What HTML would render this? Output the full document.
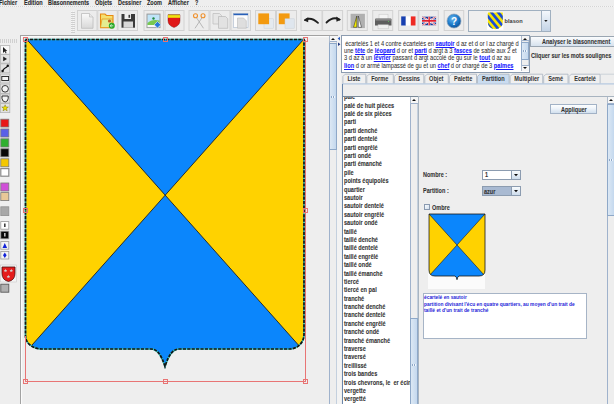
<!DOCTYPE html>
<html><head><meta charset="utf-8">
<style>
*{box-sizing:border-box;margin:0;padding:0}
html,body{width:614px;height:404px;overflow:hidden;background:#eeeeee;font-family:"Liberation Sans",sans-serif;}
.a{position:absolute}
.menu{font-size:6.9px;transform:scaleX(0.8);transform-origin:0 0;margin-top:-1.26px;font-weight:bold;color:#2a2a2a;top:-0.2px;white-space:nowrap;-webkit-text-stroke:0.1px #2a2a2a}
.tb{position:absolute;top:10px;width:20px;height:20px;border:1px solid #d6d6d6;border-radius:1px;background:#ececec}
.lt{position:absolute;left:0;width:10px;border:1px solid #c8c8c8;background:#e6e6e6}
.tab{position:absolute;top:74px;height:9px;font-size:7px;transform:scaleX(0.8);font-weight:bold;color:#333;text-align:center;line-height:9px;-webkit-text-stroke:0px #333}
.lst{font-size:7px;font-weight:bold;color:#333;-webkit-text-stroke:0.08px #333;white-space:nowrap;line-height:8.386px;width:90px}
.lst{transform:scaleX(0.8) !important;transform-origin:0 0}
.sb{position:absolute;background:#eeeeee;border-left:1px solid #b8c4d0}
.lbl{position:absolute;font-size:6.9px;transform:scaleX(0.8);transform-origin:0 0;font-weight:bold;color:#333;-webkit-text-stroke:0.08px #333;white-space:nowrap}
.txt{font-size:6.4px;transform:scaleX(0.89);transform-origin:0 0;margin-top:-0.63px;color:#303030;white-space:nowrap;position:absolute;left:343.8px;-webkit-text-stroke:0.05px #303030}
.txt u{color:#1a1aff;font-weight:bold;-webkit-text-stroke:0.1px #1a1aff}
</style></head><body>
<!-- menu -->
<div class="a menu" style="left:-1px">Fichier</div>
<div class="a menu" style="left:24px">Edition</div>
<div class="a menu" style="left:47.5px">Blasonnements</div>
<div class="a menu" style="left:95px">Objets</div>
<div class="a menu" style="left:118px">Dessiner</div>
<div class="a menu" style="left:147px">Zoom</div>
<div class="a menu" style="left:168px">Afficher</div>
<div class="a menu" style="left:195px">?</div>

<!-- toolbar buttons -->
<div class="a" style="left:0;top:6.3px;width:614px;height:1.2px;background:repeating-linear-gradient(90deg,#d4d4d4 0 1px,#f4f4f4 1px 2px)"></div>
<div class="a" style="left:70.5px;top:10.5px;width:4.5px;height:22px;background:repeating-linear-gradient(0deg,#cfcfcf 0 1px,transparent 1px 2px),repeating-linear-gradient(90deg,#f6f6f6 0 1px,transparent 1px 2px)"></div>
<svg class="a" style="left:0;top:0" width="614" height="36" viewBox="0 0 614 36">
<defs>
<linearGradient id="gpage" x1="0" y1="0" x2="0" y2="1"><stop offset="0" stop-color="#fafafa"/><stop offset="1" stop-color="#d8d8d8"/></linearGradient>
<linearGradient id="gblu" x1="0" y1="0" x2="0" y2="1"><stop offset="0" stop-color="#eef3f8"/><stop offset="1" stop-color="#c8d6e4"/></linearGradient>
<radialGradient id="ghelp" cx="0.4" cy="0.35" r="0.7"><stop offset="0" stop-color="#6ab8f0"/><stop offset="0.6" stop-color="#1a78c8"/><stop offset="1" stop-color="#0c4c94"/></radialGradient>
</defs>
<g fill="#ececec" stroke="#d2d2d2" stroke-width="1">
<rect x="77.5" y="10.5" width="19.5" height="20"/>
<rect x="97.8" y="10.5" width="19.5" height="20"/>
<rect x="118" y="10.5" width="19.5" height="20"/>
<rect x="144" y="10.5" width="19.5" height="20"/>
<rect x="165" y="10.5" width="19" height="20"/>
<rect x="189" y="10.5" width="20" height="20"/>
<rect x="210" y="10.5" width="20" height="20"/>
<rect x="231" y="10.5" width="19.5" height="20"/>
<rect x="255.5" y="10.5" width="20" height="20"/>
<rect x="276.5" y="10.5" width="20" height="20"/>
<rect x="301" y="10.5" width="21" height="20"/>
<rect x="322.6" y="10.5" width="20" height="20"/>
<rect x="347.3" y="10.5" width="20" height="20"/>
<rect x="372.7" y="10.5" width="20" height="20"/>
<rect x="398.6" y="10.5" width="19.5" height="20"/>
<rect x="418.8" y="10.5" width="19.5" height="20"/>
<rect x="444.2" y="10.5" width="19.5" height="20"/>
</g>
<!-- new doc -->
<path d="M81.5,13.5 H89.5 L93,17 V28.3 H81.5 Z" fill="url(#gpage)" stroke="#bdbdbd" stroke-width="0.8"/>
<path d="M89.5,13.5 V17 H93" fill="#e8e8e8" stroke="#bdbdbd" stroke-width="0.7"/>
<!-- open folder -->
<path d="M100.5,14 H105 L106.5,15.5 H113 V27.8 H100.5 Z" fill="#f4e070" stroke="#e88a10" stroke-width="1.1"/>
<path d="M102,19 H112.5 L111,27.5 H100.5 Z" fill="#e4ec90" stroke="#e89a20" stroke-width="0.8"/>
<circle cx="109.5" cy="21" r="1.6" fill="#c06020"/>
<circle cx="111.8" cy="25.8" r="3" fill="#28a828"/>
<path d="M110.3,25.8 H113.3 M111.5,24.3 L110.3,25.8 L111.5,27.3" stroke="#fff" stroke-width="0.7" fill="none"/>
<!-- save -->
<path d="M121.5,14 H135 V27.7 H121.5 Z" fill="#3a3a3a"/>
<rect x="124.5" y="14" width="6.5" height="5" fill="#f0f0f0"/>
<rect x="128.5" y="14.8" width="1.6" height="3" fill="#3a3a3a"/>
<rect x="123.5" y="21.5" width="9.5" height="6.2" fill="#d8d8d8"/>
<!-- image -->
<rect x="146.5" y="13.6" width="14" height="14.5" fill="#9a9a9a"/>
<rect x="147.5" y="14.6" width="12" height="12.5" fill="#bfe4f8"/>
<path d="M147.5,23 Q152,18.5 159.5,20.5 V27.1 H147.5 Z" fill="#78c850"/>
<rect x="147.5" y="25" width="12" height="2.1" fill="#f8f8f8"/>
<circle cx="153.5" cy="18.5" r="1.2" fill="#208840"/>
<path d="M157.5,21.5 L160.8,24.8 L157.5,28.1 L154.2,24.8 Z" fill="#2a78d8" stroke="#e0f0ff" stroke-width="0.6"/>
<!-- shield red -->
<path d="M168,14.8 H180 V20.5 Q180,25.5 174,27.5 Q168,25.5 168,20.5 Z" fill="#e01818" stroke="#700808" stroke-width="0.4"/>
<rect x="168" y="14.8" width="12" height="3" fill="#f0e010"/>
<path d="M168,14.8 H180" stroke="#806000" stroke-width="0.4"/>
<!-- scissors -->
<circle cx="195.5" cy="15.8" r="2" fill="none" stroke="#f0902a" stroke-width="1.1"/>
<circle cx="203" cy="15.8" r="2" fill="none" stroke="#f0902a" stroke-width="1.1"/>
<path d="M196.5,17.7 L203.5,28.3 M202,17.7 L195,28.3" stroke="#a8a8a8" stroke-width="0.8" fill="none"/>
<!-- copy -->
<path d="M213,13.5 H219.5 L221.5,15.5 V24 H213 Z" fill="#e6e6e6" stroke="#bcbcbc" stroke-width="0.7"/>
<path d="M218.5,16.5 H225.5 L227.7,18.7 V28.3 H218.5 Z" fill="#e2e2e2" stroke="#b8b8b8" stroke-width="0.7"/>
<!-- paste window -->
<rect x="233.5" y="13.6" width="14.5" height="14" fill="#fcfcfc" stroke="#a8b8cc" stroke-width="0.6"/>
<rect x="233.5" y="13.6" width="14.5" height="1.6" fill="#2860b8"/>
<path d="M237.5,18 H243.5 L246.3,20.8 V28.2 H237.5 Z" fill="#dedede" stroke="#b8b8b8" stroke-width="0.6"/>
<!-- orange 1 -->
<rect x="264" y="18.8" width="9.6" height="9.4" fill="#e4eaf0" stroke="#c8d0d8" stroke-width="0.5"/>
<rect x="258.3" y="13.4" width="10.8" height="10.8" fill="#f39a10"/>
<!-- orange 2 -->
<rect x="278.8" y="13.4" width="10.8" height="10.8" fill="#f39a10"/>
<rect x="285" y="18.8" width="9.2" height="9.4" fill="#dfe6ee" stroke="#c8d0d8" stroke-width="0.5"/>
<!-- undo -->
<path d="M305,20 Q311,16.5 318,22.8" fill="none" stroke="#202020" stroke-width="1.8" stroke-linecap="round"/>
<path d="M304,20.4 L308.3,17 L308.2,22.2 Z" fill="#202020"/>
<!-- redo -->
<path d="M339.5,19.5 Q333,16 326.5,22.5" fill="none" stroke="#202020" stroke-width="1.8" stroke-linecap="round"/>
<path d="M340.8,19.8 L336.2,16.6 L336.5,21.8 Z" fill="#202020"/>
<!-- mirror -->
<rect x="350.6" y="13.8" width="14.3" height="14.3" fill="#b0b0b0"/>
<path d="M353.5,27.3 L356.8,16 V27.3 Z" fill="#f8f000" stroke="#202020" stroke-width="0.5"/>
<path d="M361.5,27.3 L358.3,16 V27.3 Z" fill="#ffffff" stroke="#202020" stroke-width="0.5"/>
<!-- printer -->
<rect x="379" y="14.2" width="9" height="5" fill="#f4f4f4" stroke="#c4c4c4" stroke-width="0.5"/>
<path d="M376,18.5 H390.5 Q391.5,18.5 391.5,19.5 V25.5 H375 V19.5 Q375,18.5 376,18.5 Z" fill="#5e5e5e"/>
<rect x="375.5" y="19" width="15.5" height="1.6" fill="#8a8a8a"/>
<circle cx="388.5" cy="21.5" r="0.5" fill="#60d060"/>
<rect x="378" y="24.8" width="10.5" height="4" fill="#f0f0f0" stroke="#c0c0c0" stroke-width="0.5"/>
<!-- FR flag -->
<rect x="401.2" y="16.4" width="4.6" height="9.1" fill="#1840b0"/>
<rect x="405.8" y="16.4" width="5" height="9.1" fill="#ffffff"/>
<rect x="410.8" y="16.4" width="4.7" height="9.1" fill="#ee2a24"/>
<!-- UK flag -->
<svg x="422" y="16.4" width="14.3" height="9.1" viewBox="0 0 60 30" preserveAspectRatio="none">
<rect width="60" height="30" fill="#1a3a98"/>
<path d="M0,0 L60,30 M60,0 L0,30" stroke="#fff" stroke-width="6"/>
<path d="M0,0 L60,30 M60,0 L0,30" stroke="#e02030" stroke-width="2.5"/>
<path d="M30,0 V30 M0,15 H60" stroke="#fff" stroke-width="10"/>
<path d="M30,0 V30 M0,15 H60" stroke="#e02030" stroke-width="6"/>
</svg>
<!-- help -->
<circle cx="454" cy="21" r="7" fill="url(#ghelp)" stroke="#8aa0b8" stroke-width="0.7"/>
<text x="454" y="24.6" text-anchor="middle" font-family="Liberation Sans" font-weight="bold" font-size="10" fill="#fff">?</text>
</svg>
<!-- combo blason -->
<div class="a" style="left:467.6px;top:10.4px;width:83.2px;height:21.3px;border:1px solid #a0b0c0;background:#efefef"></div>
<div class="a" style="left:541.2px;top:10.4px;width:9.6px;height:21.3px;border:1px solid #a0b0c0;background:linear-gradient(#f4f8fc,#c4d4e6)"></div>
<div class="a" style="left:504.6px;top:17.9px;font-size:5.6px;font-weight:bold;color:#3a3a3a">blason</div>
<svg class="a" style="left:0;top:0" width="614" height="36" viewBox="0 0 614 36">
<defs><clipPath id="bsh"><path d="M487.8,12.6 H502.8 V22 Q502.8,28.2 495.3,29.3 Q487.8,28.2 487.8,22 Z"/></clipPath></defs>
<rect x="487" y="12.2" width="16.4" height="17.6" fill="#fff"/>
<g clip-path="url(#bsh)">
<rect x="487" y="12" width="17" height="18" fill="#f6e400"/>
<path d="M481,8 L500,31 M487.8,8 L506.8,31 M494.6,8 L513.6,31 M474.2,8 L493.2,31" stroke="#1a4cd8" stroke-width="2.7"/>
</g>
<path d="M544.2,20 H547.6 L545.9,22 Z" fill="#202020"/>
</svg>

<!-- left toolbar -->
<div class="a" style="left:0;top:38.5px;width:17px;height:4px;background:repeating-linear-gradient(90deg,#d0d0d0 0 1px,transparent 1px 2px)"></div>
<svg class="a" style="left:0;top:36px" width="20" height="260" viewBox="0 36 20 260">
<g stroke="#b4b4b4" stroke-width="0.8" fill="#e2e2e2">
<rect x="0.5" y="45.6" width="9.3" height="8.6" fill="#f8f8f8"/>
<rect x="0.5" y="54.6" width="9.3" height="8.6"/>
<rect x="0.5" y="63.8" width="9.3" height="9"/>
<rect x="0.5" y="74" width="9.3" height="9"/>
<rect x="0.5" y="84" width="9.3" height="9.5"/>
<rect x="0.5" y="94" width="9.3" height="9"/>
<rect x="0.5" y="103.6" width="9.3" height="9"/>
</g>
<path d="M3,47 L3,53 L4.6,51.6 L5.8,53.5 L6.6,53 L5.5,51.2 L7.3,51 Z" fill="#202020"/>
<path d="M3.2,56.5 L7,58.9 L3.2,61.3 Z" fill="#202020"/>
<path d="M2.5,71 Q4,68.5 5.2,68 Q6.5,67.5 7.8,65.8" stroke="#101010" stroke-width="1.1" fill="none"/>
<circle cx="2.6" cy="71" r="1.2" fill="#101010"/><circle cx="7.8" cy="65.7" r="1.2" fill="#101010"/>
<rect x="1.8" y="76.5" width="6.8" height="4" fill="#f4f4f4" stroke="#202020" stroke-width="0.9"/>
<circle cx="5.1" cy="88.8" r="3.3" fill="#f4f4f4" stroke="#202020" stroke-width="0.9"/>
<path d="M2,96 H8.2 V98.5 Q8,101.5 5.2,102 Q2.2,101.5 2,98.5 Z" fill="#f4f4f4" stroke="#202020" stroke-width="0.9"/>
<path d="M5.1,104.8 L6,107 L8.4,107 L6.5,108.5 L7.2,110.9 L5.1,109.5 L3,110.9 L3.7,108.5 L1.8,107 L4.2,107 Z" fill="#f0e000" stroke="#606000" stroke-width="0.4"/>
<g stroke="#7a7a7a" stroke-width="0.8">
<rect x="0.8" y="119.2" width="8" height="7.8" fill="#e81818"/>
<rect x="0.8" y="129" width="8" height="8" fill="#5a60e8"/>
<rect x="0.8" y="138.8" width="8" height="8.2" fill="#30b030"/>
<rect x="0.8" y="148.8" width="8" height="8" fill="#080808"/>
<rect x="0.8" y="158.8" width="8" height="8" fill="#f4c800"/>
<rect x="0.8" y="168.6" width="8" height="7.6" fill="#ffffff" stroke="#8a8a8a" stroke-width="1.2"/>
<rect x="0.8" y="183" width="8" height="8" fill="#d050d8"/>
<rect x="0.8" y="192.6" width="8" height="8" fill="#e8c898"/>
<rect x="0.8" y="206.8" width="8" height="8.8" fill="#a8a8a8" stroke="#909090"/>
</g>
<g stroke="#9a9a9a" stroke-width="0.8">
<rect x="0.8" y="221.6" width="8" height="7.6" fill="#ffffff"/>
<rect x="0.8" y="231.2" width="8" height="7.6" fill="#080808"/>
<rect x="0.8" y="241.6" width="8" height="7.6" fill="#f4f4f4"/>
<rect x="0.8" y="251.4" width="8" height="7.6" fill="#f4f4f4"/>
</g>
<rect x="4" y="223.5" width="1.6" height="3.5" fill="#404040"/>
<rect x="4" y="233" width="1.6" height="3.5" fill="#c0c0c0"/>
<path d="M2.5,248 L4.8,243 L7.1,248 Z" fill="#1020d8"/>
<path d="M4.8,252.5 L6.6,255.2 L4.8,258 L3,255.2 Z" fill="#1020d8"/>
<rect x="0.3" y="265" width="16.4" height="17" fill="#f4f4f4" stroke="#c8c8c8" stroke-width="0.6"/>
<path d="M2,267 H15 V273.5 Q15,280 8.5,281.5 Q2,280 2,273.5 Z" fill="#e41c1c" stroke="#4a1010" stroke-width="0.8"/>
<g fill="#d0d0d0"><path d="M5.5,268.8 L6,270 L7.2,270.1 L6.3,271 L6.6,272.2 L5.5,271.6 L4.4,272.2 L4.7,271 L3.8,270.1 L5,270 Z"/><path d="M11.3,268.8 L11.8,270 L13,270.1 L12.1,271 L12.4,272.2 L11.3,271.6 L10.2,272.2 L10.5,271 L9.6,270.1 L10.8,270 Z"/><path d="M8.4,274.8 L8.9,276 L10.1,276.1 L9.2,277 L9.5,278.2 L8.4,277.6 L7.3,278.2 L7.6,277 L6.7,276.1 L7.9,276 Z"/></g>
<rect x="0.8" y="284.2" width="8" height="8" fill="#b0b0b0" stroke="#5a5a5a" stroke-width="0.9"/>
</svg>

<!-- canvas frame -->
<div class="a" style="left:20.2px;top:34.9px;width:318px;height:380px;border:1px solid #a2a2a2;border-right:none;background:#eeeeee;box-shadow:inset 1.2px 1.2px 0 #fbfbfb"></div>
<!-- canvas scrollbar -->
<div class="a" style="left:329.4px;top:36.2px;width:7.60px;height:373.80px;background:#eeeeee;border-left:1px solid #9fb2cc;border-right:1px solid #c4d0de"></div>
<div class="a" style="left:329.4px;top:36.2px;width:7.60px;height:6.20px;background:#f6f6f6;border-left:1px solid #b0bccc;border-bottom:1px solid #9fb2cc"></div>
<svg class="a" style="left:330.20px;top:37.30px" width="6" height="4" viewBox="0 0 6 4"><path d="M1,3 L3,1 L5,3 Z" fill="#101010"/></svg>
<div class="a" style="left:329.4px;top:42.60px;width:7.60px;height:107.80px;background:linear-gradient(90deg,#dce8f4,#c4d8ee);border:1px solid #8ea8c8"></div>
<div class="a" style="left:331.40px;top:95.70px;width:3.60px;height:2px;background:repeating-linear-gradient(90deg,#8ea8c8 0 1px,#f0f6fc 1px 2px)"></div>
<!-- split divider -->
<div class="a" style="left:336.8px;top:35.5px;width:4.6px;height:370px;background:#f3f3f3"></div>
<svg class="a" style="left:336px;top:35px" width="6" height="12" viewBox="0 0 6 12"><path d="M4,1.8 L1.6,3.6 L4,5.4 Z" fill="#3060c0"/><path d="M2,7.4 L4.4,9.2 L2,11 Z" fill="#203880"/></svg>

<!-- text area -->
<div class="a" style="left:341.2px;top:34.7px;width:188.6px;height:38.4px;background:#fff;border:1px solid #8c9cb0"></div>
<div class="txt" style="top:40.2px;padding-left:1.3px"> écartelés 1 et 4 contre écartelés en <u>sautoir</u> d az et d or l az chargé d</div>
<div class="txt" style="top:47.5px">une <u>tête</u> de <u>léopard</u> d or et <u>parti</u> d argt à 3 <u>fasces</u> de sable aux 2 et</div>
<div class="txt" style="top:54.9px">3 d az à un <u>lévrier</u> passant d argt accolé de gu sur le <u>tout</u> d az au</div>
<div class="txt" style="top:62.2px"><u>lion</u> d or armé lampassé de gu et un <u>chef</u> d or chargé de 3 <u>palmes</u></div>
<!-- text area scrollbar -->
<div class="a" style="left:521.4px;top:36.2px;width:7.60px;height:34.80px;background:#eeeeee;border-left:1px solid #9fb2cc;border-right:1px solid #c4d0de"></div>
<div class="a" style="left:521.4px;top:36.2px;width:7.60px;height:5.00px;background:#f6f6f6;border-left:1px solid #b0bccc;border-bottom:1px solid #9fb2cc"></div>
<svg class="a" style="left:522.20px;top:36.70px" width="6" height="4" viewBox="0 0 6 4"><path d="M1,3 L3,1 L5,3 Z" fill="#101010"/></svg>
<div class="a" style="left:521.4px;top:65.00px;width:7.60px;height:6.00px;background:#f6f6f6;border-left:1px solid #b0bccc;border-top:1px solid #9fb2cc"></div>
<svg class="a" style="left:522.20px;top:66.00px" width="6" height="4" viewBox="0 0 6 4"><path d="M1,1 L3,3 L5,1 Z" fill="#101010"/></svg>
<div class="a" style="left:521.4px;top:41.60px;width:7.60px;height:18.40px;background:linear-gradient(90deg,#dce8f4,#c4d8ee);border:1px solid #8ea8c8"></div>
<div class="a" style="left:523.40px;top:49.50px;width:3.60px;height:2px;background:repeating-linear-gradient(90deg,#8ea8c8 0 1px,#f0f6fc 1px 2px)"></div>

<!-- Analyser button -->
<div class="a" style="left:530px;top:36px;width:90px;height:11px;border:1px solid #9aa6b2;background:linear-gradient(#fbfcfd,#d6e2ee)"></div>
<div class="lbl" style="left:542px;top:37.5px">Analyser le blasonnement</div>
<div class="lbl" style="left:530.6px;top:51.5px">Cliquer sur les mots soulignes</div>

<!-- tabs -->
<svg class="a" style="left:0;top:0" width="614" height="100" viewBox="0 0 614 100">
<path d="M342.9,83.6 V76.5 L345.2,74.2 H365.8 V83.6" fill="#f0f0f0" stroke="#a9b4c0" stroke-width="0.8"/>
<path d="M366.8,83.6 V76.5 L369.1,74.2 H393.3 V83.6" fill="#f0f0f0" stroke="#a9b4c0" stroke-width="0.8"/>
<path d="M394.3,83.6 V76.5 L396.6,74.2 H423.8 V83.6" fill="#f0f0f0" stroke="#a9b4c0" stroke-width="0.8"/>
<path d="M424.8,83.6 V76.5 L427.1,74.2 H448.3 V83.6" fill="#f0f0f0" stroke="#a9b4c0" stroke-width="0.8"/>
<path d="M449.3,83.6 V76.5 L451.6,74.2 H476.5 V83.6" fill="#f0f0f0" stroke="#a9b4c0" stroke-width="0.8"/>
<path d="M477.5,83.6 V76.5 L479.8,74.2 H509.1 V83.6" fill="#cadcf0" stroke="#a9b4c0" stroke-width="0.8"/>
<path d="M510.1,83.6 V76.5 L512.4,74.2 H542.7 V83.6" fill="#f0f0f0" stroke="#a9b4c0" stroke-width="0.8"/>
<path d="M543.7,83.6 V76.5 L546.0,74.2 H568.0 V83.6" fill="#f0f0f0" stroke="#a9b4c0" stroke-width="0.8"/>
<path d="M569.0,83.6 V76.5 L571.3,74.2 H600.1 V83.6" fill="#f0f0f0" stroke="#a9b4c0" stroke-width="0.8"/>
<path d="M600.6,74.2 H614" stroke="#c4ccd4" stroke-width="0.8"/>
<rect x="342" y="83.3" width="272" height="1.2" fill="#b4c8e0"/>
</svg>
<div class="tab" style="left:342.4px;width:23.9px">Liste</div>
<div class="tab" style="left:366.3px;width:27.5px">Forme</div>
<div class="tab" style="left:393.8px;width:30.5px">Dessins</div>
<div class="tab" style="left:424.3px;width:24.5px">Objet</div>
<div class="tab" style="left:448.8px;width:28.2px">Palette</div>
<div class="tab" style="left:477px;width:32.6px">Partition</div>
<div class="tab" style="left:509.6px;width:33.6px">Multiplier</div>
<div class="tab" style="left:543.2px;width:25.3px">Semé</div>
<div class="tab" style="left:568.5px;width:32.1px">Ecartelé</div>
<div class="a" style="left:341.9px;top:84px;width:1.3px;height:330px;background:#6a86aa"></div>

<!-- list -->
<div class="a" style="left:343px;top:95.9px;width:75.4px;height:320px;background:#fff;border:1px solid #7a8a99;border-left:none"></div>
<div class="a" style="left:343.2px;top:96.8px;width:66.8px;height:310px;overflow:hidden"><div class="lst" style="position:absolute;left:0.8px;top:-3.5px">palé<br>palé de huit pièces<br>palé de six pièces<br>parti<br>parti denché<br>parti dentelé<br>parti engrêlé<br>parti ondé<br>parti émanché<br>pile<br>points équipolés<br>quartier<br>sautoir<br>sautoir dentelé<br>sautoir engrêlé<br>sautoir ondé<br>taillé<br>taillé denché<br>taillé dentelé<br>taillé engrêlé<br>taillé ondé<br>taillé émanché<br>tiercé<br>tiercé en pal<br>tranché<br>tranché denché<br>tranché dentelé<br>tranché engrêlé<br>tranché ondé<br>tranché émanché<br>traverse<br>traversé<br>treillissé<br>trois bandes<br>trois chevrons, le&nbsp; er écin<br>vergette<br>vergetté</div></div>
<div class="a" style="left:410px;top:96.9px;width:8.40px;height:313.10px;background:#eeeeee;border-left:1px solid #9fb2cc;border-right:1px solid #c4d0de"></div>
<div class="a" style="left:410px;top:96.9px;width:8.40px;height:7.00px;background:#f6f6f6;border-left:1px solid #b0bccc;border-bottom:1px solid #9fb2cc"></div>
<svg class="a" style="left:411.20px;top:98.40px" width="6" height="4" viewBox="0 0 6 4"><path d="M1,3 L3,1 L5,3 Z" fill="#101010"/></svg>
<div class="a" style="left:410px;top:318.00px;width:8.40px;height:95.00px;background:linear-gradient(90deg,#dce8f4,#c4d8ee);border:1px solid #8ea8c8"></div>
<div class="a" style="left:412.00px;top:364.40px;width:4.40px;height:2px;background:repeating-linear-gradient(90deg,#8ea8c8 0 1px,#f0f6fc 1px 2px)"></div>

<!-- partition panel -->
<div class="a" style="left:418px;top:96px;width:196px;height:320px;border:1px solid #a8b4c0;border-right:none"></div>
<div class="a" style="left:606.8px;top:96.5px;width:8.20px;height:313.50px;background:#eeeeee;border-left:1px solid #9fb2cc;border-right:1px solid #c4d0de"></div>
<div class="a" style="left:606.8px;top:96.5px;width:8.20px;height:7.00px;background:#f6f6f6;border-left:1px solid #b0bccc;border-bottom:1px solid #9fb2cc"></div>
<svg class="a" style="left:607.90px;top:98.00px" width="6" height="4" viewBox="0 0 6 4"><path d="M1,3 L3,1 L5,3 Z" fill="#101010"/></svg>
<div class="a" style="left:606.8px;top:103.60px;width:8.20px;height:112.40px;background:linear-gradient(90deg,#dce8f4,#c4d8ee);border:1px solid #8ea8c8"></div>
<div class="a" style="left:608.80px;top:159.00px;width:4.20px;height:2px;background:repeating-linear-gradient(90deg,#8ea8c8 0 1px,#f0f6fc 1px 2px)"></div>
<div class="a" style="left:549.9px;top:104.2px;width:46.7px;height:9.6px;border:1px solid #a2b2c6;background:linear-gradient(#fdfefe,#f0f5fa 40%,#d2e0ee)"></div>
<div class="lbl" style="left:560.5px;top:105.9px">Appliquer</div>
<div class="lbl" style="left:423px;top:170.7px">Nombre :</div>
<div class="lbl" style="left:423px;top:187.4px">Partition :</div>
<div class="a" style="left:482px;top:169.8px;width:38.6px;height:10.3px;border:1px solid #8c9cb0;background:#fff"></div>
<div class="a" style="left:511px;top:169.8px;width:9.6px;height:10.3px;border:1px solid #8c9cb0;background:linear-gradient(#f8fbfd,#cddcec)"></div>
<svg class="a" style="left:513px;top:173px" width="6" height="4" viewBox="0 0 6 4"><path d="M1,1 H5 L3,3.2 Z" fill="#101010"/></svg>
<div class="lbl" style="left:484.5px;top:171.4px">1</div>
<div class="a" style="left:482px;top:186px;width:38.6px;height:10.3px;border:1px solid #8c9cb0;background:#a9bad2"></div>
<div class="a" style="left:511px;top:186px;width:9.6px;height:10.3px;border:1px solid #8c9cb0;background:linear-gradient(#f8fbfd,#cddcec)"></div>
<svg class="a" style="left:513px;top:189.2px" width="6" height="4" viewBox="0 0 6 4"><path d="M1,1 H5 L3,3.2 Z" fill="#101010"/></svg>
<div class="lbl" style="left:484px;top:187.6px">azur</div>
<div class="a" style="left:424px;top:204px;width:6.4px;height:6.2px;border:1px solid #8a9ab0;background:linear-gradient(135deg,#f8fbfe,#d4e0ee)"></div>
<div class="lbl" style="left:432.2px;top:203.5px">Ombre</div>
<div class="a" style="left:427.5px;top:214px;width:57.5px;height:74.5px;background:#fbfbfb"></div>
<svg class="a" style="left:420px;top:205px" width="80" height="90" viewBox="420 205 80 90">
<defs><clipPath id="psh"><path d="M429,214 H485 V270 Q485,276 479,276 H459 Q457.5,276.5 457,279.7 Q456.5,276.5 455,276 H435 Q429,276 429,270 Z"/></clipPath></defs>
<g clip-path="url(#psh)">
<rect x="425" y="210" width="65" height="75" fill="#0b86fc"/>
<path d="M429,214 L457,245 L429,276 Z M485,214 L457,245 L485,276 Z" fill="#ffd200"/>
<path d="M429,214 L485,276 M485,214 L429,276" stroke="#1a1a1a" stroke-width="0.6"/>
</g>
<path d="M429,214 H485 V270 Q485,276 479,276 H459 Q457.5,276.5 457,279.7 Q456.5,276.5 455,276 H435 Q429,276 429,270 Z" fill="none" stroke="#181818" stroke-width="0.8"/>
</svg>
<div class="a" style="left:423px;top:293.2px;width:163.6px;height:46px;background:#fff;border:1px solid #a6b4c6"></div>
<div class="a" style="left:424px;top:294.6px;font-size:4.85px;font-weight:bold;color:#2424d8;line-height:6.9px;white-space:nowrap">écartelé en sautoir<br>partition divisant l'écu en quatre quartiers, au moyen d'un trait de<br>taillé et d'un trait de tranché</div>

<!-- shield svg -->
<svg class="a" style="left:0;top:0" width="614" height="404" viewBox="0 0 614 404">
<defs>
<clipPath id="shc"><path d="M25.5,39.5 H304 V334.5 A14.5,14.5 0 0 1 289.5,349 H179 C173,349.2 169,354 165,366.5 C161,354 157,349.2 151,349 H42 A16.5,13 0 0 1 25.5,336 Z"/></clipPath>
</defs>
<g clip-path="url(#shc)">
<rect x="20" y="35" width="290" height="340" fill="#0b86fc"/>
<path d="M18.4,30 L165.2,195.2 L9.8,370 Z" fill="#ffd200"/>
<path d="M312,30 L165.2,195.2 L320.6,370 Z" fill="#ffd200"/>
<path d="M18.4,30 L320.6,370 M312,30 L9.8,370" stroke="#202020" stroke-width="0.9" fill="none"/>
</g>
<path d="M25.5,39.5 H304 V334.5 A14.5,14.5 0 0 1 289.5,349 H179 C173,349.2 169,354 165,366.5 C161,354 157,349.2 151,349 H42 A16.5,13 0 0 1 25.5,336 Z" fill="none" stroke="#30c0b8" stroke-width="1.6"/>
<path d="M25.5,39.5 H304 V334.5 A14.5,14.5 0 0 1 289.5,349 H179 C173,349.2 169,354 165,366.5 C161,354 157,349.2 151,349 H42 A16.5,13 0 0 1 25.5,336 Z" fill="none" stroke="#141414" stroke-width="1.7" stroke-dasharray="3.2 1.2"/>
<g fill="none" stroke="#e87474" stroke-width="1" shape-rendering="crispEdges">
<path d="M25.5,336 V381.5 H305.5 V39.5"/>
<rect x="23.5" y="37.5" width="4" height="4"/>
<rect x="163.5" y="37.5" width="4" height="4"/>
<rect x="303.5" y="37.5" width="4" height="4"/>
<rect x="23.5" y="208.5" width="4" height="4"/>
<rect x="303.5" y="208.5" width="4" height="4"/>
<rect x="23.5" y="379.5" width="4" height="4"/>
<rect x="163.5" y="379.5" width="4" height="4"/>
<rect x="303.5" y="379.5" width="4" height="4"/>
</g>
</svg>
</body></html>
